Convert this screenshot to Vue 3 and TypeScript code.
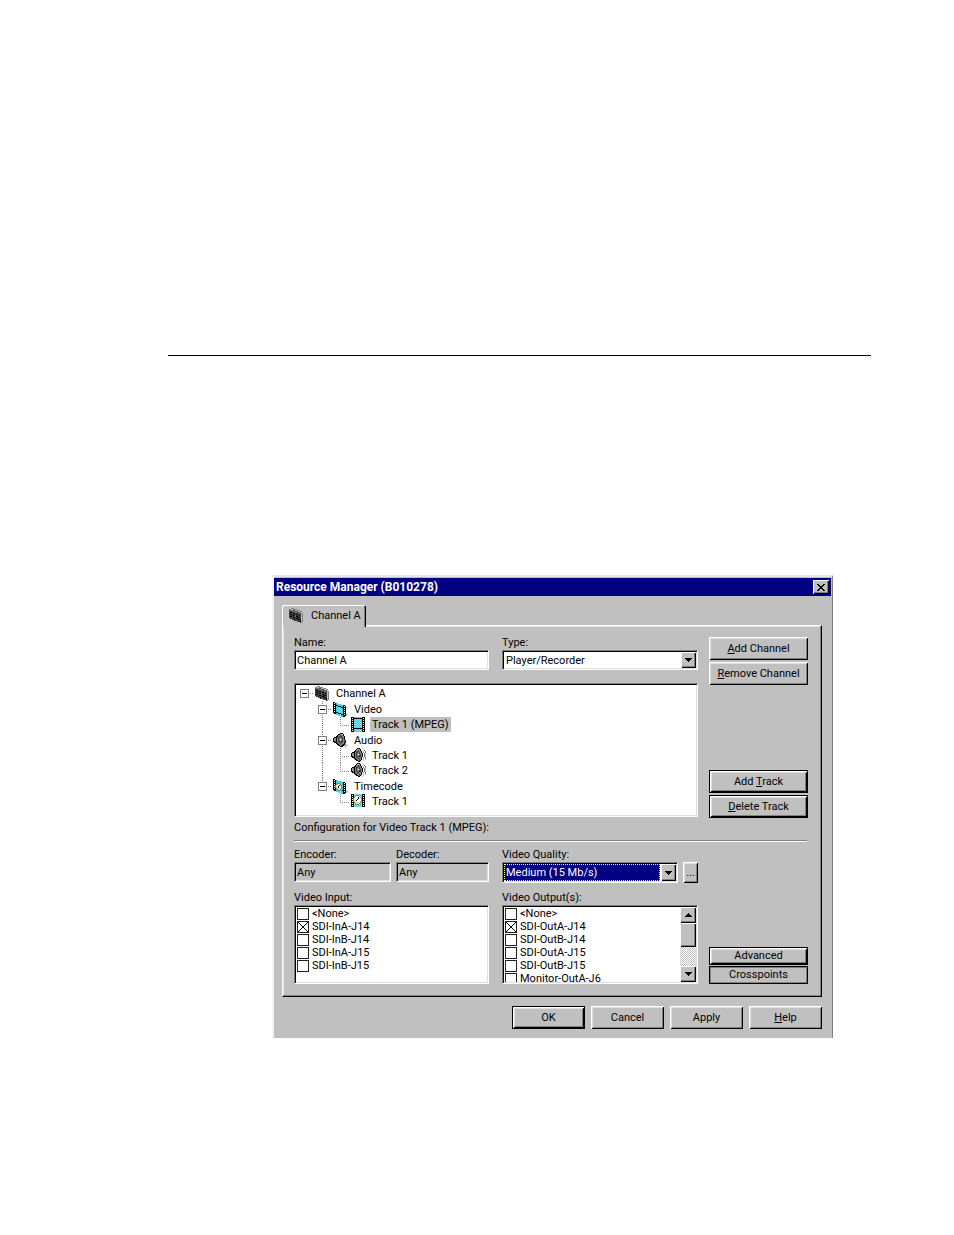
<script setup lang="ts">
import { reactive, ref } from 'vue'

type IconName = 'channel' | 'video' | 'film' | 'audio' | 'speaker' | 'timecode' | 'clip'
type Cell = 'box' | 'root' | 'tee' | 'ell' | 'pipe' | 'none' | 'last'

interface TreeRow {
  label: string
  icon: IconName
  cells: Cell[]
  leaf?: boolean
}

interface Option {
  id: string
  label: string
  on: boolean
}

const palette: Record<string, string> = {
  k: '#000000',
  d: '#404040',
  g: '#808080',
  l: '#c0c0c0',
  w: '#ffffff',
  c: '#30d0e0',
  t: '#80e8f0',
  y: '#f0e070',
  n: '#00c000',
}

const bitmaps: Record<IconName, string[]> = {
  channel: [
    '..ggg...........',
    'ggllgggg........',
    'dgggddllggg.....',
    'ddddggddgllgg...',
    'dkkdddggddggl...',
    'ddddkkdddggdlg..',
    'dkkddddkkdddlg..',
    'ddddkkndddkdlg..',
    'dkkdddnkkdddlg..',
    'ddddkkdddkkdlg..',
    '.ddddddkkdddlg..',
    '...ddkdddkkdlg..',
    '.....ddddddklg..',
    '........dddklg..',
    '...........dg...',
  ],
  video: [
    'kk..............',
    'kwkcc...........',
    'kkkcctcc........',
    'kwkkkctccckk....',
    'kkkctkkkcckwk...',
    'kwkcctctkkkkk...',
    'kkkctctctckwk...',
    'kwkcctctcckkk...',
    'kkkctctctckwk...',
    'kwkcctctcckkk...',
    'kkkkkctctckwk...',
    '.kkctkkkcckkkl..',
    '...cctctkkkwkll.',
    '.....tctcckkkl..',
    '........cckk....',
  ],
  film: [
    'kkkctctctctkkk..',
    'kwkkkkkkkkkkwk..',
    'kkkctctctctkkk..',
    'kwktctctctckwk..',
    'kkkctctctctkkk..',
    'kwktctctctckwk..',
    'kkkctctctctkkk..',
    'kwktctctctckwk..',
    'kkkctctctctkkk..',
    'kwktctctctckwk..',
    'kkkctctctctkkk..',
    'kwkkkkkkkkkkwk..',
    'kkkctctctctkkk..',
    'kwktctctctckwk..',
    'kkkctctctctkkk..',
  ],
  audio: [
    '.......kkk......',
    '.....kkgllk.....',
    '....kggdggk.....',
    '...kkgdddggk....',
    '.kkkgddgddgk....',
    'kggkgdgggdgk....',
    'klgkgdgwgdgk....',
    'kggkgdgggdggk...',
    'kkgkgddgkdgdk...',
    '.kkkggdddggdk...',
    '...kkggdgggkl...',
    '....kkgggdkkll..',
    '.....kkgdkkllll.',
    '.......kkk.ll...',
  ],
  speaker: [
    '......kkk..l....',
    '.....kllgk..l...',
    '....kggdgk.l.g..',
    '...kkgddggk.l.g.',
    '.kkkgddgdgk.g.g.',
    'kggkgdggdggk.gl.',
    'klgkgdgwgdgk.gl.',
    'kggkgdggddgk.gl.',
    'kkgkgddgkdgk.gl.',
    '.kkkggddggk.g.g.',
    '...kkggdggk.l.g.',
    '....kkggdgk.l.l.',
    '.....kkgdk..l...',
    '.......kk..l....',
  ],
  timecode: [
    'kk..............',
    'kwkcc...........',
    'kkkcctcc........',
    'kwkcctcccckk....',
    'kkkcgggccckwk...',
    'kwkgywygcckkk...',
    'kkgywwkygckwk...',
    'kwgywkwwgckkk...',
    'kkgyykwwgckwk...',
    'kwkgyywygckkk...',
    'kkkcgyygcckwk...',
    '.kkccggcckkkkl..',
    '...cctctcckwkll.',
    '.....tctcckkkl..',
    '........cckk....',
  ],
  clip: [
    'kkktctctctckkk..',
    'kwkctgggtctkwk..',
    'kkktgwwwgtckkk..',
    'kwkgwwwkwgtkwk..',
    'kkgywwwkwwgkkk..',
    'kwgywwkwwwgkwk..',
    'kkgyykwwwwgkkk..',
    'kwgyyywwwygkwk..',
    'kkkgyyywygckkk..',
    'kwktgyyygctkwk..',
    'kkktcgggtctkkk..',
    'kwkctctctctkwk..',
    'kkktctctctckkk..',
  ],
}

interface Pixel { x: number; y: number; fill: string }

function pixels(name: IconName): Pixel[] {
  return bitmaps[name].flatMap((row, y) =>
    [...row].flatMap((ch, x) => (ch === '.' ? [] : [{ x, y, fill: palette[ch] }])),
  )
}

const channelPixels = pixels('channel')

const rows: TreeRow[] = [
  { label: 'Channel A', icon: 'channel', cells: ['root'] },
  { label: 'Video', icon: 'video', cells: ['none', 'box'] },
  { label: 'Track 1 (MPEG)', icon: 'film', cells: ['none', 'pipe', 'ell'], leaf: true },
  { label: 'Audio', icon: 'audio', cells: ['none', 'box'] },
  { label: 'Track 1', icon: 'speaker', cells: ['none', 'pipe', 'tee'], leaf: true },
  { label: 'Track 2', icon: 'speaker', cells: ['none', 'pipe', 'ell'], leaf: true },
  { label: 'Timecode', icon: 'timecode', cells: ['none', 'last'] },
  { label: 'Track 1', icon: 'clip', cells: ['none', 'none', 'ell'], leaf: true },
]
const selected = ref(2)

const name = ref('Channel A')
const type = ref('Player/Recorder')
const quality = ref('Medium (15 Mb/s)')

const inputs = reactive<Option[]>([
  { id: 'in0', label: '<None>', on: false },
  { id: 'in1', label: 'SDI-InA-J14', on: true },
  { id: 'in2', label: 'SDI-InB-J14', on: false },
  { id: 'in3', label: 'SDI-InA-J15', on: false },
  { id: 'in4', label: 'SDI-InB-J15', on: false },
])
const outputs = reactive<Option[]>([
  { id: 'out0', label: '<None>', on: false },
  { id: 'out1', label: 'SDI-OutA-J14', on: true },
  { id: 'out2', label: 'SDI-OutB-J14', on: false },
  { id: 'out3', label: 'SDI-OutA-J15', on: false },
  { id: 'out4', label: 'SDI-OutB-J15', on: false },
  { id: 'out5', label: 'Monitor-OutA-J6', on: false },
])

const isBox = (c: Cell) => c === 'box' || c === 'root' || c === 'last'
</script>

<template>
  <main class="page">
    <hr class="rule">
    <section class="dialog" aria-labelledby="dialog-title">
      <header class="titlebar">
        <h1 id="dialog-title">Resource Manager (B010278)</h1>
        <button class="close" type="button" aria-label="Close">
          <svg width="8" height="7" viewBox="0 0 8 7" shape-rendering="crispEdges">
            <path d="M0 0h2v1h1v1h2V1h1V0h2v1H7v1H6v1H5v1h1v1h1v1h1v1H6V6H5V5H3v1H2v1H0V6h1V5h1V4h1V3H2V2H1V1H0z" />
          </svg>
        </button>
      </header>

      <div class="body">
        <div class="tabs" role="tablist">
          <button class="tab" type="button" role="tab" aria-selected="true">
            <svg class="icon" width="16" height="16" viewBox="0 0 16 16" shape-rendering="crispEdges">
              <rect v-for="(p, i) in channelPixels" :key="i" :x="p.x" :y="p.y" width="1" height="1" :fill="p.fill" />
            </svg>
            Channel A
          </button>
        </div>

        <div class="panel" role="tabpanel">
          <div class="section top">
            <div class="main">
              <div class="pair">
                <div class="field">
                  <label for="name">Name:</label>
                  <input id="name" v-model="name" class="sunken text" type="text">
                </div>
                <div class="field">
                  <label for="type">Type:</label>
                  <div class="combo sunken">
                    <select id="type" v-model="type">
                      <option>Player/Recorder</option>
                    </select>
                    <span class="drop"><svg width="7" height="4" viewBox="0 0 7 4" shape-rendering="crispEdges"><path d="M0 0h7v1H6v1H5v1H4v1H3V3H2V2H1V1H0z" /></svg></span>
                  </div>
                </div>
              </div>

              <ul class="tree sunken" role="tree" aria-label="Channel resources">
                <li
                  v-for="(row, i) in rows"
                  :key="i"
                  class="row"
                  :class="{ leaf: row.leaf }"
                  role="treeitem"
                  :aria-level="row.cells.length"
                  :aria-selected="selected === i"
                  @click="selected = i"
                >
                  <span v-for="(cell, c) in row.cells" :key="c" class="cell" :class="cell">
                    <button v-if="isBox(cell)" class="expander" type="button" :aria-label="'Collapse ' + row.label" />
                  </span>
                  <svg class="icon" width="16" height="15" viewBox="0 0 16 15" shape-rendering="crispEdges">
                    <rect v-for="(p, n) in pixels(row.icon)" :key="n" :x="p.x" :y="p.y" width="1" height="1" :fill="p.fill" />
                  </svg>
                  <span class="label" :class="{ selected: selected === i }">{{ row.label }}</span>
                </li>
              </ul>
            </div>

            <div class="side">
              <div class="stack">
                <button class="btn" type="button"><span><u>A</u>dd Channel</span></button>
                <button class="btn" type="button"><span><u>R</u>emove Channel</span></button>
              </div>
              <div class="stack">
                <button class="btn strong" type="button"><span>Add <u>T</u>rack</span></button>
                <button class="btn strong" type="button"><span><u>D</u>elete Track</span></button>
              </div>
            </div>
          </div>

          <h2 class="caption">Configuration for Video Track 1 (MPEG):</h2>
          <hr class="groove">

          <div class="section">
            <div class="main">
              <div class="pair">
                <div class="codecs">
                  <div class="field">
                    <label for="encoder">Encoder:</label>
                    <input id="encoder" class="sunken text readonly" type="text" value="Any" readonly>
                  </div>
                  <div class="field">
                    <label for="decoder">Decoder:</label>
                    <input id="decoder" class="sunken text readonly" type="text" value="Any" readonly>
                  </div>
                </div>
                <div class="field">
                  <label for="quality">Video Quality:</label>
                  <div class="quality">
                    <div class="combo sunken focused">
                      <select id="quality" v-model="quality">
                        <option>Medium (15 Mb/s)</option>
                      </select>
                      <span class="drop"><svg width="7" height="4" viewBox="0 0 7 4" shape-rendering="crispEdges"><path d="M0 0h7v1H6v1H5v1H4v1H3V3H2V2H1V1H0z" /></svg></span>
                    </div>
                    <button class="btn more" type="button" aria-label="More video quality options">...</button>
                  </div>
                </div>
              </div>

              <div class="pair lists">
                <fieldset class="field">
                  <legend>Video Input:</legend>
                  <div class="list sunken">
                    <div class="options">
                      <label v-for="o in inputs" :key="o.id" class="option" :for="o.id">
                        <input :id="o.id" v-model="o.on" type="checkbox">{{ o.label }}
                      </label>
                    </div>
                  </div>
                </fieldset>
                <fieldset class="field">
                  <legend>Video Output(s):</legend>
                  <div class="list sunken">
                    <div class="options">
                      <label v-for="o in outputs" :key="o.id" class="option" :for="o.id">
                        <input :id="o.id" v-model="o.on" type="checkbox">{{ o.label }}
                      </label>
                    </div>
                    <div class="scrollbar">
                      <button class="arrow" type="button" aria-label="Scroll up">
                        <svg width="7" height="4" viewBox="0 0 7 4" shape-rendering="crispEdges"><path d="M3 0h1v1h1v1h1v1h1v1H0V3h1V2h1V1h1z" /></svg>
                      </button>
                      <div class="thumb" />
                      <div class="track" />
                      <button class="arrow" type="button" aria-label="Scroll down">
                        <svg width="7" height="4" viewBox="0 0 7 4" shape-rendering="crispEdges"><path d="M0 0h7v1H6v1H5v1H4v1H3V3H2V2H1V1H0z" /></svg>
                      </button>
                    </div>
                  </div>
                </fieldset>
              </div>
            </div>

            <div class="side end">
              <button class="btn strong slim" type="button">Advanced</button>
              <button class="btn flat slim" type="button">Crosspoints</button>
            </div>
          </div>
        </div>

        <footer class="actions">
          <button class="btn strong" type="button">OK</button>
          <button class="btn" type="button">Cancel</button>
          <button class="btn" type="button">Apply</button>
          <button class="btn" type="button"><span><u>H</u>elp</span></button>
        </footer>
      </div>
    </section>
  </main>
</template>

<style>
body {
  margin: 0;
  background: #fff;
}
</style>

<style scoped>
.page {
  box-sizing: border-box;
  min-height: 100vh;
  padding: 355px 83px 40px 168px;
  font: 11px/12px Roboto, "Liberation Sans", sans-serif;
  color: #000;
}

.page *,
.page *::before {
  box-sizing: border-box;
}

button,
input,
select {
  margin: 0;
  padding: 0;
  border: 0;
  border-radius: 0;
  font: inherit;
  color: inherit;
  appearance: none;
  outline: none;
}

svg {
  display: block;
  flex: none;
}

.rule {
  height: 1px;
  margin: 0;
  border: 0;
  background: #000;
}

.dialog {
  margin: 219px 38px 0 104px;
  padding-top: 1px;
  border: 2px solid;
  border-color: #e8e8e8 #808080 #808080 #f4f4f4;
  border-bottom: 0;
  border-right-width: 1px;
  background: #c0c0c0;
}

.titlebar {
  display: flex;
  align-items: center;
  justify-content: space-between;
  height: 18px;
  margin-right: 1px;
  padding: 0 2px;
  background: #000080;
  color: #fff;
}

.titlebar h1 {
  margin: 0;
  font-size: 12px;
  line-height: 18px;
  font-weight: 700;
}

.close {
  display: grid;
  place-items: center;
  width: 16px;
  height: 14px;
  background: #c0c0c0;
  box-shadow: inset 1px 1px 0 #fff, inset -1px -1px 0 #000, inset -2px -2px 0 #808080;
}

.body {
  padding: 9px 10px 9px 8px;
}

.tabs {
  display: flex;
}

.tab {
  position: relative;
  z-index: 1;
  display: flex;
  align-items: center;
  gap: 6px;
  height: 22px;
  margin-bottom: -2px;
  padding: 0 5px 0 7px;
  border-radius: 2px 2px 0 0;
  background: #c0c0c0;
  box-shadow: inset 1px 1px 0 #fff, inset -1px 0 0 #000, inset -2px 0 0 #808080;
}

.panel {
  padding: 10px 13px 12px 11px;
  border: 1px solid;
  border-color: #fff #000 #000 #fff;
  background: #c0c0c0;
  box-shadow: inset -1px -1px 0 #808080, inset 1px 1px 0 #dfdfdf;
}

.section {
  display: flex;
  gap: 11px;
}

.main {
  display: flex;
  flex: 1;
  flex-direction: column;
  min-width: 0;
}

.top .main {
  gap: 13px;
}

.pair {
  display: grid;
  grid-template-columns: 195fr 196fr;
  gap: 13px;
}

.codecs {
  display: grid;
  grid-template-columns: 97fr 93fr;
  gap: 5px;
}

.field {
  display: flex;
  flex-direction: column;
  gap: 1px;
  min-width: 0;
  margin: 0;
  padding: 0;
  border: 0;
}

.field label:not(.option) {
  padding-top: 1px;
}

.field legend {
  padding: 0;
  margin-bottom: 1px;
}

.sunken {
  border: 1px solid;
  border-color: #808080 #fff #fff #808080;
  background: #fff;
  box-shadow: inset 1px 1px 0 #000, inset -1px -1px 0 #dfdfdf;
}

.text {
  width: 100%;
  height: 20px;
  padding: 0 2px;
}

.readonly {
  background: #c0c0c0;
}

.combo {
  display: grid;
  grid-template: 1fr / 1fr;
  flex: 1;
  height: 20px;
  padding: 1px;
}

.combo select {
  grid-area: 1 / 1;
  width: 100%;
  min-width: 0;
  padding: 1px 18px 0 2px;
  background: transparent;
}

.focused {
  height: 21px;
}

.focused select {
  width: auto;
  margin-right: 16px;
  padding: 0 1px;
  border: 1px dotted #ffff80;
  background: #000080;
  color: #fff;
}

.drop {
  display: grid;
  grid-area: 1 / 1;
  place-items: center;
  justify-self: end;
  width: 15px;
  background: #c0c0c0;
  box-shadow: inset 1px 1px 0 #fff, inset -1px -1px 0 #000, inset -2px -2px 0 #808080;
  pointer-events: none;
}

.quality {
  display: flex;
  gap: 5px;
}

.tree {
  min-height: 134px;
  margin: 0;
  padding: 1px;
  list-style: none;
}

.row {
  display: flex;
  align-items: center;
  height: 16px;
}

.row.leaf {
  height: 15px;
}

.row .icon {
  margin: 0 3px 0 1px;
}

.label {
  padding: 0 2px;
  line-height: 15px;
}

.label.selected {
  background: #c0c0c0;
}

.cell {
  display: flex;
  align-items: center;
  align-self: stretch;
  width: 18px;
  padding-left: 4px;
  --v: repeating-linear-gradient(to bottom, #808080 0 1px, transparent 1px 2px);
  --h: repeating-linear-gradient(to right, #808080 0 1px, transparent 1px 2px);
  background-repeat: no-repeat;
}

.pipe {
  background-image: var(--v);
  background-position: 8px 0;
  background-size: 1px 100%;
}

.box,
.tee {
  background-image: var(--v), var(--h);
  background-position: 8px 0, 8px 8px;
  background-size: 1px 100%, 10px 1px;
}

.ell,
.last {
  background-image: var(--v), var(--h);
  background-position: 8px 0, 8px 8px;
  background-size: 1px 8px, 10px 1px;
}

.root {
  background-image: var(--h);
  background-position: 8px 8px;
  background-size: 10px 1px;
}

.expander {
  width: 9px;
  height: 9px;
  border: 1px solid #808080;
  background: linear-gradient(#000, #000) 1px 3px / 5px 1px no-repeat #fff;
}

.side {
  display: flex;
  flex-direction: column;
  justify-content: space-between;
  width: 99px;
  padding-top: 1px;
}

.top .side {
  margin-bottom: -1px;
}

.side.end {
  justify-content: flex-end;
  gap: 1px;
}

.stack {
  display: flex;
  flex-direction: column;
  gap: 2px;
}

.btn {
  height: 23px;
  background: #c0c0c0;
  box-shadow: inset 1px 1px 0 #fff, inset -1px -1px 0 #000, inset 2px 2px 0 #dfdfdf, inset -2px -2px 0 #808080;
  text-align: center;
}

.btn.strong {
  border: 1px solid #000;
}

.btn.slim {
  height: 18px;
}

.btn.flat {
  border: 1px solid #000;
  box-shadow: inset 0 0 0 1px #808080;
}

.btn.more {
  width: 15px;
  height: 21px;
}

.caption {
  margin: 5px 0 6px;
  font: inherit;
}

.groove {
  height: 2px;
  margin: 0 1px 6px 0;
  border: 0;
  border-top: 1px solid #808080;
  border-bottom: 1px solid #fff;
}

.lists {
  margin-top: 9px;
}

.list {
  display: flex;
  height: 79px;
  padding: 1px;
  overflow: hidden;
}

.options {
  flex: 1;
  min-width: 0;
  overflow: hidden;
}

.option {
  display: flex;
  align-items: center;
  gap: 3px;
  height: 13px;
  padding-left: 1px;
  line-height: 11px;
}

.option input {
  width: 12px;
  height: 12px;
  border: 1px solid #202020;
  background: #fff;
}

.option input:checked {
  background:
    linear-gradient(45deg, transparent 47%, #000 47% 53%, transparent 53%),
    linear-gradient(-45deg, transparent 47%, #000 47% 53%, transparent 53%),
    #fff;
}

.scrollbar {
  display: flex;
  flex-direction: column;
  width: 16px;
}

.arrow,
.thumb {
  background: #c0c0c0;
  box-shadow: inset 1px 1px 0 #fff, inset -1px -1px 0 #000, inset -2px -2px 0 #808080;
}

.arrow {
  display: grid;
  place-items: center;
  height: 16px;
}

.thumb {
  height: 24px;
}

.track {
  flex: 1;
  background: repeating-conic-gradient(#c0c0c0 0 25%, #fff 0 50%) 0 0 / 2px 2px;
}

.actions {
  display: flex;
  justify-content: flex-end;
  gap: 6px;
  margin-top: 9px;
}

.actions .btn {
  width: 73px;
}
</style>
